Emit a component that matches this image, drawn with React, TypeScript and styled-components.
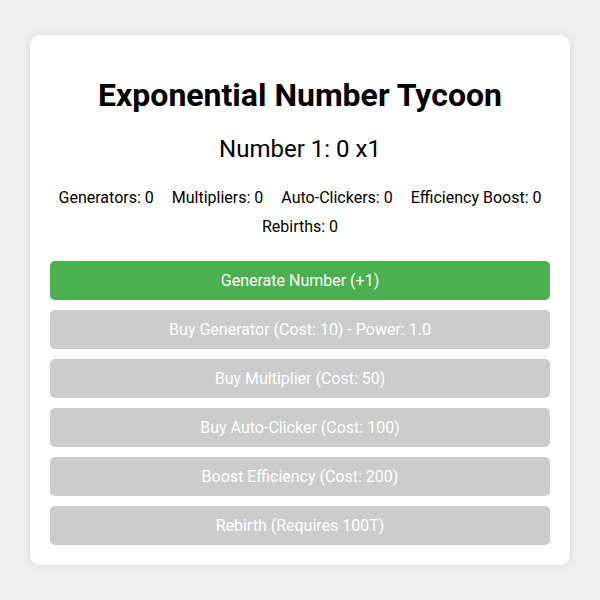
import React from "react";
import styled, { createGlobalStyle } from "styled-components";

const Global = createGlobalStyle`
  body {
    margin: 0;
    background: #f0f0f0;
    font-family: Roboto, "Liberation Sans", Arial, sans-serif;
  }
`;

const stats = [
  "Generators: 0",
  "Multipliers: 0",
  "Auto-Clickers: 0",
  "Efficiency Boost: 0",
  "Rebirths: 0",
];

const actions = [
  { label: "Generate Number (+1)", enabled: true },
  { label: "Buy Generator (Cost: 10) - Power: 1.0", enabled: false },
  { label: "Buy Multiplier (Cost: 50)", enabled: false },
  { label: "Buy Auto-Clicker (Cost: 100)", enabled: false },
  { label: "Boost Efficiency (Cost: 200)", enabled: false },
  { label: "Rebirth (Requires 100T)", enabled: false },
];

const App = () => {
  return (
    <Page>
      <Global />
      <Card>
        <Title>Exponential Number Tycoon</Title>
        <Counter>Number 1: 0 x1</Counter>
        <Stats>
          {stats.map((s) => (
            <Stat key={s}>{s}</Stat>
          ))}
        </Stats>
        <Actions>
          {actions.map((a) => (
            <ActionButton key={a.label} $enabled={a.enabled} disabled={!a.enabled}>
              {a.label}
            </ActionButton>
          ))}
        </Actions>
      </Card>
    </Page>
  );
};

export default App;

const Page = styled.div`
  width: 600px;
  height: 600px;
  padding: 35px 30px;
  box-sizing: border-box;
`;

const Card = styled.div`
  background: #fff;
  border-radius: 10px;
  box-shadow: 0 0 10px rgba(0, 0, 0, 0.1);
  padding: 20px;
  text-align: center;
`;

const Title = styled.h1`
  font-size: 32px;
  font-weight: 700;
  color: #000;
  margin: 22px 0 21px;
  line-height: 37px;
`;

const Counter = styled.div`
  font-size: 24px;
  line-height: 28px;
  color: #000;
`;

const Stats = styled.div`
  display: flex;
  flex-wrap: wrap;
  justify-content: center;
  column-gap: 18px;
  row-gap: 10px;
  margin: 25px 0 25px;
`;

const Stat = styled.span`
  font-size: 16px;
  line-height: 19px;
  color: #000;
`;

const Actions = styled.div`
  display: flex;
  flex-direction: column;
  gap: 10px;
`;

const ActionButton = styled.button<{ $enabled: boolean }>`
  width: 100%;
  height: 39px;
  border: none;
  border-radius: 5px;
  font-family: inherit;
  font-size: 16px;
  color: #fff;
  background: ${(p) => (p.$enabled ? "#4caf50" : "#cccccc")};
  cursor: ${(p) => (p.$enabled ? "pointer" : "not-allowed")};
`;
